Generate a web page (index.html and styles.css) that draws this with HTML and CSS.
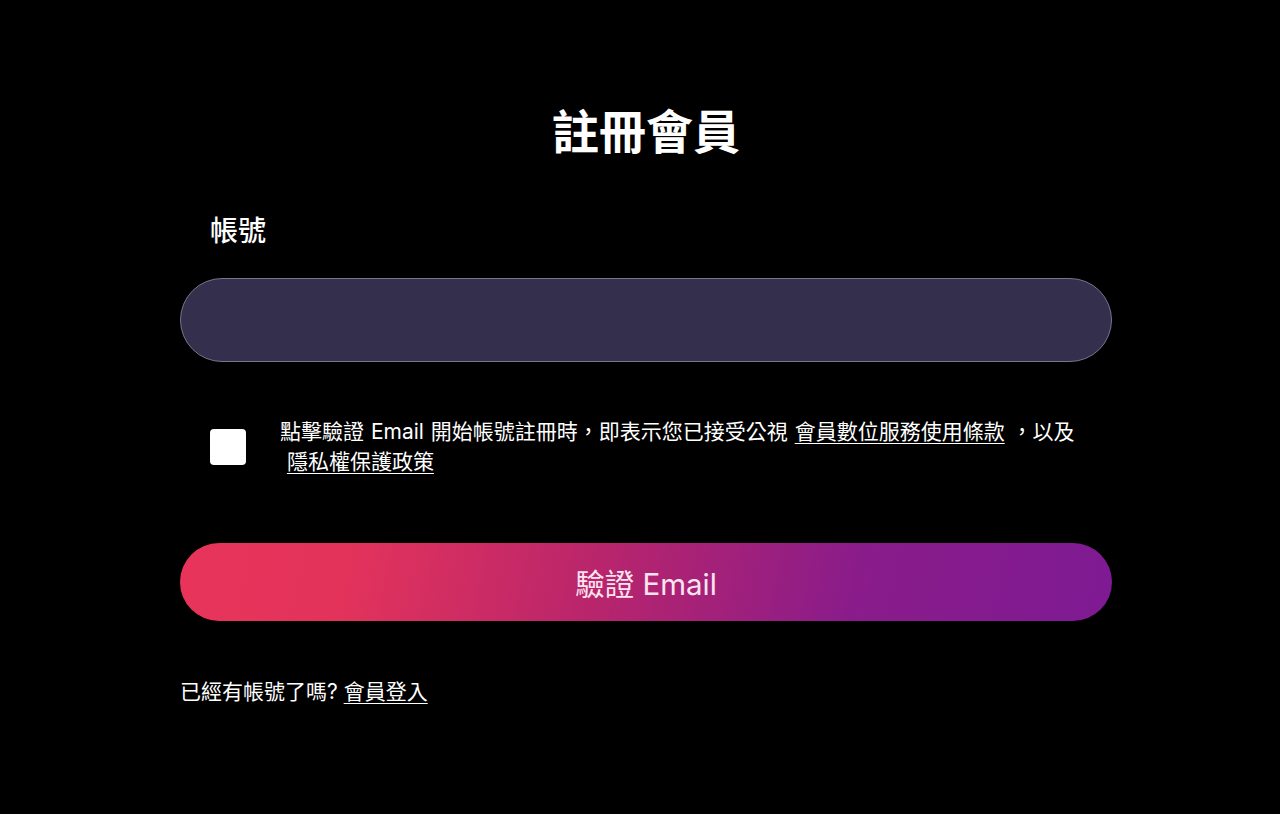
FILE: index.html
```html
<!DOCTYPE html>
<html lang="zh-Hant">
<head>
<meta charset="utf-8">
<title>註冊會員</title>
<link rel="stylesheet" href="styles.css">
</head>
<body>
<main class="page">
  <h1 class="title">註冊會員</h1>
  <label class="label" for="account">帳號</label>
  <input class="input" id="account" type="text">
  <div class="agree">
    <span class="checkbox"></span>
    <p class="agree-text">點擊驗證 Email 開始帳號註冊時，即表示您已接受公視 <a href="#">會員數位服務使用條款</a> ，以及<br>&nbsp;<a href="#">隱私權保護政策</a></p>
  </div>
  <button class="submit" type="button">驗證 Email</button>
  <p class="login">已經有帳號了嗎? <a href="#">會員登入</a></p>
</main>
</body>
</html>
```

FILE: styles.css
```css
html, body {
  margin: 0;
  padding: 0;
  background: #000;
  height: 100%;
}
body {
  font-family: Inter, "Noto Sans CJK TC", "Noto Sans", sans-serif;
  color: #fff;
}
.page {
  width: 932px;
  margin-left: 180px;
  padding-top: 99px;
  display: flex;
  flex-direction: column;
}
.title {
  margin: 0;
  text-align: center;
  font-size: 47px;
  font-weight: 700;
  line-height: 66px;
  letter-spacing: 0;
}
.label {
  margin: 46px 0 0 30px;
  font-size: 28px;
  font-weight: 500;
  line-height: 40px;
}
.input {
  margin-top: 27px;
  box-sizing: border-box;
  height: 84px;
  width: 100%;
  border: 1px solid #77748c;
  border-radius: 42px;
  background: #332f4d;
  outline: none;
  color: #fff;
  font: inherit;
  font-size: 22px;
  padding: 0 40px;
}
.agree {
  margin-top: 55px;
  display: flex;
  align-items: center;
  padding-left: 30px;
}
.checkbox {
  flex: none;
  width: 36px;
  height: 36px;
  background: #fff;
  border-radius: 4px;
}
.agree-text {
  margin: 0 0 0 34px;
  font-size: 21px;
  line-height: 30px;
  word-spacing: 1px;
}
.agree-text a, .login a {
  color: #fff;
  text-decoration: underline;
  text-underline-offset: 4px;
  text-decoration-thickness: 1px;
}
.submit {
  margin-top: 66px;
  height: 78px;
  width: 100%;
  border: none;
  border-radius: 39px;
  background: linear-gradient(102deg, #e8345a 0%, #e3335b 18%, #b8256c 45%, #8a1c8a 72%, #7e1a93 100%);
  color: #fbe4f0;
  font-family: Inter, "Noto Sans CJK TC", "Noto Sans", sans-serif;
  font-size: 29.5px;
  font-weight: 400;
  cursor: pointer;
}
.login {
  margin: 56px 0 0 0;
  font-size: 21px;
  line-height: 30px;
}
```
